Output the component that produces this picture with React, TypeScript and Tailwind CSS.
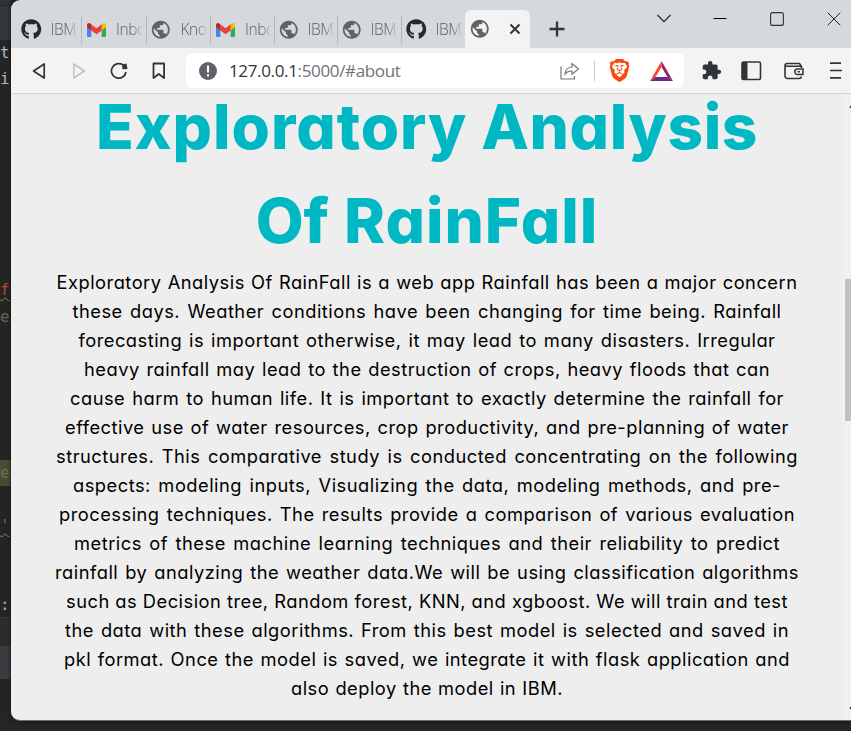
import type { ReactNode } from "react";
import { FaGithub } from "react-icons/fa";
import { MdExtension, MdPublic } from "react-icons/md";
import { SiBrave } from "react-icons/si";

function Gmail() {
  return (
    <svg width="19" height="14" viewBox="0 0 19 14" className="shrink-0">
      <path d="M0 2h4.3v12H1.3A1.3 1.3 0 0 1 0 12.7z" fill="#4285f4" />
      <path d="M14.7 2H19v10.7a1.3 1.3 0 0 1-1.3 1.3h-3z" fill="#34a853" />
      <path d="M14.7 1.3 16 .4c1.3-.9 3 0 3 1.6v2l-4.3 3.4z" fill="#fbbc04" />
      <path d="M4.3 1.3 9.5 5.2l5.2-3.9v6.1L9.5 11.3 4.3 7.4z" fill="#ea4335" />
      <path d="M0 2C0 .4 1.700-.5 3 .4l1.300.9v6.100L0 4z" fill="#c5221f" />
    </svg>
  );
}

const Hub = () => <FaGithub size={20.500} className="shrink-0 text-[#24292f]" />;
const Globe = () => <MdPublic size={21.500} className="shrink-0 text-[#5f6368]" />;

type TabProps = { icon: ReactNode; label: string; width: string; inset: string; gap: string; line?: boolean };

function Tab({ icon, label, width, inset, gap, line = true }: TabProps) {
  return (
    <div className={`flex h-[29px] shrink-0 items-center ${width} ${inset} ${gap} ${line ? "border-r border-[#b4b7ba]" : ""}`}>
      {icon}
      <span className="-mt-[1px] w-[26px] overflow-hidden whitespace-nowrap bg-linear-to-r from-[#54575b] from-60% to-[#c8cbce] bg-clip-text font-['Open_Sans',sans-serif] text-[15.500px] font-light leading-[20px] tracking-[-0.400px] text-transparent">
        {label}
      </span>
    </div>
  );
}

function TabStrip() {
  return (
    <div className="flex h-12 bg-[#d5d9dc]">
      <div className="flex items-end pb-[4px]">
        <Tab icon={<Hub />} label="IBM" width="w-[71px]" inset="pl-[10px]" gap="gap-[9px]" />
        <Tab icon={<Gmail />} label="Inbo" width="w-[65px]" inset="pl-[5px]" gap="gap-[10px]" />
        <Tab icon={<Globe />} label="Kno" width="w-[64px]" inset="pl-[3px]" gap="gap-[9px]" />
        <Tab icon={<Gmail />} label="Inbo" width="w-[64px]" inset="pl-[5px]" gap="gap-[10px]" />
        <Tab icon={<Globe />} label="IBM" width="w-[63px]" inset="pl-[3px]" gap="gap-[8px]" />
        <Tab icon={<Globe />} label="IBM" width="w-[64px]" inset="pl-[3px]" gap="gap-[8px]" />
        <Tab icon={<Hub />} label="IBM" width="w-[63px]" inset="pl-[4px]" gap="gap-[9px]" line={false} />
      </div>
      <div className="mt-[10px] flex h-[38px] w-[65px] items-center rounded-t-[6px] bg-[#f3f3f3] pl-[4px]">
        <Globe />
        <svg width="12" height="12" viewBox="0 0 12 12" className="ml-[18px]">
          <path d="M1.500 1.500l9 9M10.500 1.500l-9 9" stroke="#303438" strokeWidth="2" />
        </svg>
      </div>
      <svg width="16" height="16" viewBox="0 0 16 16" className="ml-[19px] mt-[21px]">
        <path d="M8 .5v15M.5 8h15" stroke="#303438" strokeWidth="2.300" />
      </svg>
      <svg width="14" height="9" viewBox="0 0 14 9" className="ml-[92px] mt-[14px]">
        <path d="M.5 1 7 7.700 13.500 1" fill="none" stroke="#222" strokeWidth="1.100" />
      </svg>
      <svg width="14" height="2" viewBox="0 0 14 2" className="ml-[42px] mt-[18px]">
        <path d="M.5.5h13" stroke="#000" />
      </svg>
      <svg width="14" height="14" viewBox="0 0 14 14" className="ml-[43px] mt-[12px]">
        <rect x=".6" y=".6" width="12.800" height="12.800" rx="2" fill="none" stroke="#333" strokeWidth="1.100" />
      </svg>
      <svg width="14" height="14" viewBox="0 0 14 14" className="ml-[43px] mt-[12px]">
        <path d="M.7.7l12.600 12.600M13.300.7.7 13.300" stroke="#222" />
      </svg>
    </div>
  );
}

function Toolbar() {
  return (
    <div className="flex h-[46px] items-center border-b border-[#d3d3d3] bg-[#f3f3f3]">
      <svg width="14" height="18" viewBox="0 0 14 18" className="ml-[21px]">
        <path d="M12.200 2v14L1.500 9z" fill="none" stroke="#303438" strokeWidth="1.700" strokeLinejoin="round" />
      </svg>
      <svg width="14" height="18" viewBox="0 0 14 18" className="ml-[26px]">
        <path d="M1.800 2v14L12.500 9z" fill="none" stroke="#bfc1c3" strokeWidth="1.500" strokeLinejoin="round" />
      </svg>
      <svg width="18" height="18" viewBox="0 0 18 18" className="ml-[24px]">
        <path d="M12.800 2.800A7.300 7.300 0 1 0 16 10" fill="none" stroke="#303438" strokeWidth="1.700" />
        <path d="M12 2.500 16.500 1.500l1 5.500-5 .2z" fill="#303438" />
      </svg>
      <svg width="14" height="18" viewBox="0 0 14 18" className="ml-[24px]">
        <path d="M1.500 1.500h10.600v14.500L6.800 12l-5.300 4z" fill="none" stroke="#303438" strokeWidth="1.800" strokeLinejoin="round" />
      </svg>
      <div className="ml-[20px] flex h-[35px] w-[498px] shrink-0 items-center rounded-[6px] bg-white">
        <span className="ml-[13px] flex size-[18px] items-center justify-center rounded-full bg-[#5f6368]">
          <svg width="4" height="12" viewBox="0 0 4 12">
            <path d="M2 .5v7M2 9.300v2.200" stroke="#fff" strokeWidth="2" />
          </svg>
        </span>
        <span className="ml-[12px] w-[172px] whitespace-nowrap font-['Open_Sans',sans-serif] text-[17px] leading-6 tracking-[-0.350px] text-[#6f7175]">
          <span className="text-[#303438]">127.0.0.1</span>:5000/#about
        </span>
        <svg width="20" height="18" viewBox="0 0 20 18" className="ml-[159px]">
          <path d="M1 4.500V17h13.500v-3M5 12c.4-5 3.200-6.700 7-7V1.500L18.500 7 12 12.300V9C9 8.800 7 9.500 5 12z" fill="none" stroke="#74777b" strokeWidth="1.200" />
        </svg>
        <div className="ml-[14px] h-5 w-px bg-[#c8c8c8]" />
        <SiBrave size={23} className="ml-[13px] shrink-0 text-[#fb4a10]" />
        <svg width="23" height="20" viewBox="0 0 23 20" className="ml-[19px]">
          <path d="M11.500 0v6L5.500 16 0 20z" fill="#ff4724" />
          <path d="M11.500 0 23 20l-5.500-4-6-10z" fill="#9e1f63" />
          <path d="M0 20l5.500-4h12l5.500 4z" fill="#662d91" />
        </svg>
      </div>
      <MdExtension size={21} className="ml-[17px] shrink-0 text-[#303438]" />
      <svg width="21" height="20" viewBox="0 0 21 20" className="ml-[19px] shrink-0">
        <rect x="1" y="1" width="18.500" height="17.500" rx="1.500" fill="none" stroke="#303438" strokeWidth="1.600" />
        <path d="M1 1h5.500v17.500H1z" fill="#303438" />
      </svg>
      <svg width="20" height="18" viewBox="0 0 20 18" className="ml-[22px] shrink-0">
        <path d="M17.500 6V4.500l-2-3H3A2 2 0 0 0 1 3.500V14a2.500 2.500 0 0 0 2.500 2.500H15a2.500 2.500 0 0 0 2.500-2M1 4.300h16" fill="none" stroke="#303438" strokeWidth="1.600" />
        <path d="M19 7h-5.500a2.600 2.600 0 0 0 0 5.500H19zM13.500 9.800H16" fill="none" stroke="#303438" strokeWidth="1.500" />
      </svg>
      <svg width="12" height="17" viewBox="0 0 12 17" className="ml-[26px] shrink-0">
        <path d="M0 1.200h11M0 8.500h12M0 15.800h11" stroke="#303438" strokeWidth="1.700" />
      </svg>
    </div>
  );
}

const lines: [string, string][] = [
  ["Exploratory Analysis Of RainFall is a web app Rainfall has been a major concern", "w-[741px]"],
  ["these days. Weather conditions have been changing for time being. Rainfall", "w-[709px]"],
  ["forecasting is important otherwise, it may lead to many disasters. Irregular", "w-[697px]"],
  ["heavy rainfall may lead to the destruction of crops, heavy floods that can", "w-[686px]"],
  ["cause harm to human life. It is important to exactly determine the rainfall for", "w-[714px]"],
  ["effective use of water resources, crop productivity, and pre-planning of water", "w-[724px]"],
  ["structures. This comparative study is conducted concentrating on the following", "w-[742px]"],
  ["aspects: modeling inputs, Visualizing the data, modeling methods, and pre-", "w-[708px]"],
  ["processing techniques. The results provide a comparison of various evaluation", "w-[736px]"],
  ["metrics of these machine learning techniques and their reliability to predict", "w-[706px]"],
  ["rainfall by analyzing the weather data.We will be using classification algorithms", "w-[744px]"],
  ["such as Decision tree, Random forest, KNN, and xgboost. We will train and test", "w-[722px]"],
  ["the data with these algorithms. From this best model is selected and saved in", "w-[724px]"],
  ["pkl format. Once the model is saved, we integrate it with flask application and", "w-[726px]"],
  ["also deploy the model in IBM.", "w-[272px]"],
];

function Page() {
  return (
    <div className="flex h-[626px] bg-[#eeeeee]">
      <main className="flex w-[832px] shrink-0 flex-col items-center font-['Inter',sans-serif] [font-feature-settings:'cv11']">
        <h1 className="-mt-[14px] flex flex-col items-center whitespace-nowrap text-[62px] font-extrabold leading-[94px] text-[#00b8c4]">
          <span className="flex gap-[14px]">
            <span className="tracking-[0.950px]">Exploratory</span>
            <span className="tracking-[0.600px]">Analysis</span>
          </span>
          <span className="flex gap-[15px]">
            <span>Of</span>
            <span className="tracking-[1px]">RainFall</span>
          </span>
        </h1>
        <div className="flex flex-col items-center text-[18.300px] font-normal leading-[29px] tracking-[0.500px] [word-spacing:-1.500px] text-black">
          {lines.map(([text, width]) => (
            <p key={text} className={`whitespace-nowrap [text-align-last:justify] ${width}`}>
              {text}
            </p>
          ))}
        </div>
      </main>
      <div className="flex w-[8px] shrink-0 flex-col items-end bg-[#f1f1f1]">
        <svg width="2" height="3" viewBox="0 0 2 3" className="mt-[11px]">
          <path d="M2 0v3H0z" fill="#505050" />
        </svg>
        <div className="mt-[171px] h-[142px] w-[6px] bg-[#c1c1c1]" />
        <svg width="2" height="3" viewBox="0 0 2 3" className="mt-[286px]">
          <path d="M0 0h2v3z" fill="#505050" />
        </svg>
      </div>
    </div>
  );
}

function Editor() {
  return (
    <div className="h-full w-[11px] shrink-0 font-['DejaVu_Sans_Mono',monospace] text-[16px] leading-[26px] text-[#a9b7c6]">
      <div className="h-[5px] bg-[#2f3335]" />
      <div className="h-[35px] border-t border-[#252829] bg-[#34393b]" />
      <div className="h-[26px]">t</div>
      <div className="h-[211px]">i</div>
      <div className="h-[26px] text-[#b0492c] underline decoration-[#8d8860] decoration-wavy decoration-1 underline-offset-2">f</div>
      <div className="h-[157px] pt-px text-[#56704f]">e</div>
      <div className="h-[26px] bg-[#4c4a32] text-[#56784f]">e</div>
      <div className="h-[27px]" />
      <div className="h-[79px] text-[#56704f] underline decoration-[#8d8860] decoration-wavy decoration-1 underline-offset-2">'</div>
      <div className="h-[25px] text-[#9ab0c6]">:</div>
      <div className="h-[29px] border-t border-[#383838] bg-[#2a2c2e]" />
      <div className="h-[33px] bg-[#393c3e]" />
    </div>
  );
}

export default function App() {
  return (
    <div className="flex h-[731px] w-[851px] overflow-hidden bg-[#252525]">
      <Editor />
      <div className="h-[721px] w-[840px] shrink-0 overflow-hidden rounded-l-[9px] border-b border-[#707070] shadow-[0_0_4px_#111]">
        <TabStrip />
        <Toolbar />
        <Page />
      </div>
    </div>
  );
}
